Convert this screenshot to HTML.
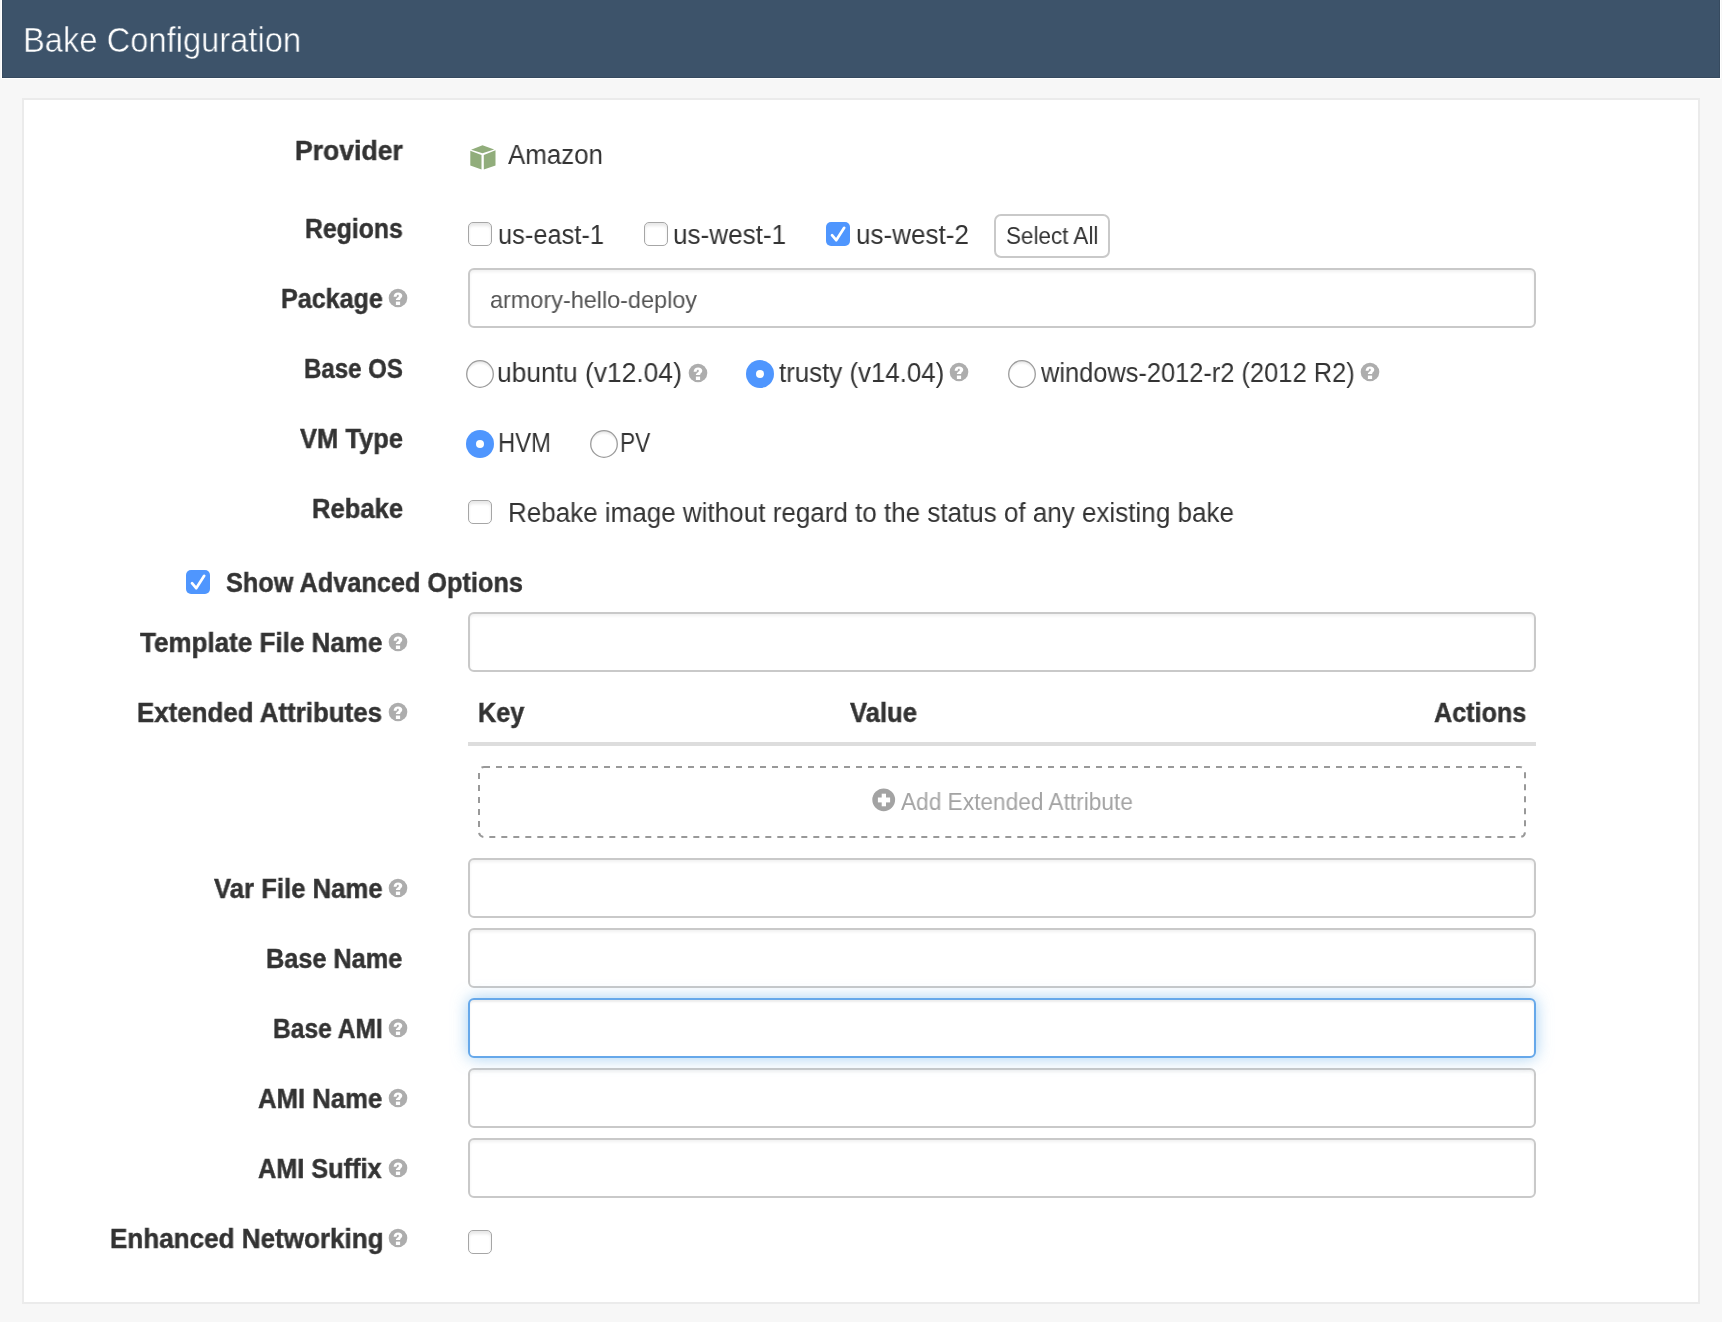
<!DOCTYPE html>
<html><head><meta charset="utf-8"><style>
html,body{margin:0;padding:0}
body{width:1722px;height:1322px;overflow:hidden;background:#f7f7f7;position:relative;font-family:"Liberation Sans",sans-serif}
.t{position:absolute;white-space:pre;transform-origin:0 0;will-change:transform}
.topwhite{position:absolute;left:1px;top:0;width:1720px;height:79px;background:#fff}
.hdr{position:absolute;left:2px;top:0;width:1718px;height:78px;background:#3d536a;box-shadow:inset 1px 0 0 rgba(0,0,0,.08),inset -1px -1px 0 rgba(0,0,0,.1)}
.panel{position:absolute;left:22px;top:98px;width:1678px;height:1206px;box-sizing:border-box;border:2px solid #ebebeb;background:#fff}
.inp{position:absolute;left:468px;width:1068px;height:60px;box-sizing:border-box;border:2px solid #c9c9c9;border-radius:6px;background:#fff;box-shadow:inset 0 2px 3px rgba(0,0,0,.06)}
.inp.focus{border-color:#66a8ea;box-shadow:inset 0 2px 2px rgba(0,0,0,.075),0 0 16px rgba(102,175,233,.6)}
.btn{position:absolute;left:994px;top:214px;width:116px;height:44px;box-sizing:border-box;border:2px solid #c9c9c9;border-radius:7px;background:#fff}
.cb{position:absolute;width:24px;height:24px;box-sizing:border-box;border:1.5px solid #a6a6a6;border-radius:5px;background:#fff;box-shadow:inset 0 3px 3px rgba(0,0,0,.09)}
.cb.on{border:none;background:#4f96fe;box-shadow:none}
.cb svg{position:absolute;left:0;top:0}
.rd{position:absolute;width:28px;height:28px;box-sizing:border-box;border:1.5px solid #a6a6a6;border-radius:50%;background:#fff;box-shadow:inset 0 2px 2px rgba(0,0,0,.06)}
.rd.on{border:none;background:#4f96fe;box-shadow:none}
.rd .dot{position:absolute;left:10px;top:10px;width:8px;height:8px;border-radius:50%;background:#fff}
.hi{position:absolute}
.rdsvg{position:absolute}
.thline{position:absolute;left:468px;top:742px;width:1068px;height:4px;background:#ddd}
.dash{position:absolute;left:478px;top:766px}
</style></head><body>
<div class="topwhite"></div>
<div class="hdr"></div>
<div class="panel"></div>

<div class="inp" style="top:268px"></div>
<div class="inp" style="top:612px"></div>
<div class="inp" style="top:858px"></div>
<div class="inp" style="top:928px"></div>
<div class="inp" style="top:1068px"></div>
<div class="inp" style="top:1138px"></div>
<div class="inp focus" style="top:998px"></div>
<div class="btn"></div>
<div class="thline"></div>
<svg class="dash" width="1048" height="72"><rect x="1" y="1" width="1046" height="70" rx="5" fill="none" stroke="#999" stroke-width="2" stroke-dasharray="6 6"/></svg>
<div class="cb" style="left:468px;top:222px"></div>
<div class="cb" style="left:644px;top:222px"></div>
<div class="cb on" style="left:826px;top:222px"><svg width="24" height="24" viewBox="0 0 24 24"><path d="M6 13.2 L10.2 18.2 L18.2 5.8" fill="none" stroke="#fff" stroke-width="2.7" stroke-linecap="round" stroke-linejoin="round"/></svg></div>
<div class="cb" style="left:468px;top:500px"></div>
<div class="cb" style="left:468px;top:1230px"></div>
<div class="cb on" style="left:186px;top:570px"><svg width="24" height="24" viewBox="0 0 24 24"><path d="M6 13.2 L10.2 18.2 L18.2 5.8" fill="none" stroke="#fff" stroke-width="2.7" stroke-linecap="round" stroke-linejoin="round"/></svg></div>
<svg class="rdsvg" style="left:466px;top:360px" width="28" height="28" viewBox="0 0 28 28"><defs><radialGradient id="rg466" cx="50%" cy="62%" r="58%"><stop offset="80%" stop-color="#fff"/><stop offset="100%" stop-color="#e9e9e9"/></radialGradient></defs><circle cx="14" cy="14" r="13.3" fill="url(#rg466)" stroke="#9c9c9c" stroke-width="1.3"/></svg>
<div class="rd on" style="left:746px;top:360px"><div class="dot"></div></div>
<svg class="rdsvg" style="left:1008px;top:360px" width="28" height="28" viewBox="0 0 28 28"><defs><radialGradient id="rg1008" cx="50%" cy="62%" r="58%"><stop offset="80%" stop-color="#fff"/><stop offset="100%" stop-color="#e9e9e9"/></radialGradient></defs><circle cx="14" cy="14" r="13.3" fill="url(#rg1008)" stroke="#9c9c9c" stroke-width="1.3"/></svg>
<div class="rd on" style="left:466px;top:430px"><div class="dot"></div></div>
<svg class="rdsvg" style="left:590px;top:430px" width="28" height="28" viewBox="0 0 28 28"><defs><radialGradient id="rg590" cx="50%" cy="62%" r="58%"><stop offset="80%" stop-color="#fff"/><stop offset="100%" stop-color="#e9e9e9"/></radialGradient></defs><circle cx="14" cy="14" r="13.3" fill="url(#rg590)" stroke="#9c9c9c" stroke-width="1.3"/></svg>
<svg class="hi" style="left:388px;top:288px" width="20" height="20" viewBox="0 0 20 20"><circle cx="10" cy="10" r="9.3" fill="#adadad"/><path d="M5.6 8.7 C5.7 5.8 7.6 4.4 10.1 4.4 C12.6 4.4 14.3 5.9 14.3 7.8 C14.3 9.9 12.1 10.3 12.1 11.9 L7.9 11.9 C7.9 9.7 10.8 9.3 10.8 7.9 C10.8 7.2 10.4 6.8 9.9 6.8 C9.2 6.8 8.8 7.4 8.6 8.7 Z" fill="#fff"/><rect x="7.9" y="13.6" width="4.2" height="3.4" fill="#fff"/></svg>
<svg class="hi" style="left:687.8px;top:362.5px" width="20" height="20" viewBox="0 0 20 20"><circle cx="10" cy="10" r="9.3" fill="#adadad"/><path d="M5.6 8.7 C5.7 5.8 7.6 4.4 10.1 4.4 C12.6 4.4 14.3 5.9 14.3 7.8 C14.3 9.9 12.1 10.3 12.1 11.9 L7.9 11.9 C7.9 9.7 10.8 9.3 10.8 7.9 C10.8 7.2 10.4 6.8 9.9 6.8 C9.2 6.8 8.8 7.4 8.6 8.7 Z" fill="#fff"/><rect x="7.9" y="13.6" width="4.2" height="3.4" fill="#fff"/></svg>
<svg class="hi" style="left:949.4px;top:362.2px" width="20" height="20" viewBox="0 0 20 20"><circle cx="10" cy="10" r="9.3" fill="#adadad"/><path d="M5.6 8.7 C5.7 5.8 7.6 4.4 10.1 4.4 C12.6 4.4 14.3 5.9 14.3 7.8 C14.3 9.9 12.1 10.3 12.1 11.9 L7.9 11.9 C7.9 9.7 10.8 9.3 10.8 7.9 C10.8 7.2 10.4 6.8 9.9 6.8 C9.2 6.8 8.8 7.4 8.6 8.7 Z" fill="#fff"/><rect x="7.9" y="13.6" width="4.2" height="3.4" fill="#fff"/></svg>
<svg class="hi" style="left:1359.5px;top:362.2px" width="20" height="20" viewBox="0 0 20 20"><circle cx="10" cy="10" r="9.3" fill="#adadad"/><path d="M5.6 8.7 C5.7 5.8 7.6 4.4 10.1 4.4 C12.6 4.4 14.3 5.9 14.3 7.8 C14.3 9.9 12.1 10.3 12.1 11.9 L7.9 11.9 C7.9 9.7 10.8 9.3 10.8 7.9 C10.8 7.2 10.4 6.8 9.9 6.8 C9.2 6.8 8.8 7.4 8.6 8.7 Z" fill="#fff"/><rect x="7.9" y="13.6" width="4.2" height="3.4" fill="#fff"/></svg>
<svg class="hi" style="left:388px;top:632px" width="20" height="20" viewBox="0 0 20 20"><circle cx="10" cy="10" r="9.3" fill="#adadad"/><path d="M5.6 8.7 C5.7 5.8 7.6 4.4 10.1 4.4 C12.6 4.4 14.3 5.9 14.3 7.8 C14.3 9.9 12.1 10.3 12.1 11.9 L7.9 11.9 C7.9 9.7 10.8 9.3 10.8 7.9 C10.8 7.2 10.4 6.8 9.9 6.8 C9.2 6.8 8.8 7.4 8.6 8.7 Z" fill="#fff"/><rect x="7.9" y="13.6" width="4.2" height="3.4" fill="#fff"/></svg>
<svg class="hi" style="left:388px;top:702px" width="20" height="20" viewBox="0 0 20 20"><circle cx="10" cy="10" r="9.3" fill="#adadad"/><path d="M5.6 8.7 C5.7 5.8 7.6 4.4 10.1 4.4 C12.6 4.4 14.3 5.9 14.3 7.8 C14.3 9.9 12.1 10.3 12.1 11.9 L7.9 11.9 C7.9 9.7 10.8 9.3 10.8 7.9 C10.8 7.2 10.4 6.8 9.9 6.8 C9.2 6.8 8.8 7.4 8.6 8.7 Z" fill="#fff"/><rect x="7.9" y="13.6" width="4.2" height="3.4" fill="#fff"/></svg>
<svg class="hi" style="left:388px;top:878px" width="20" height="20" viewBox="0 0 20 20"><circle cx="10" cy="10" r="9.3" fill="#adadad"/><path d="M5.6 8.7 C5.7 5.8 7.6 4.4 10.1 4.4 C12.6 4.4 14.3 5.9 14.3 7.8 C14.3 9.9 12.1 10.3 12.1 11.9 L7.9 11.9 C7.9 9.7 10.8 9.3 10.8 7.9 C10.8 7.2 10.4 6.8 9.9 6.8 C9.2 6.8 8.8 7.4 8.6 8.7 Z" fill="#fff"/><rect x="7.9" y="13.6" width="4.2" height="3.4" fill="#fff"/></svg>
<svg class="hi" style="left:388px;top:1018px" width="20" height="20" viewBox="0 0 20 20"><circle cx="10" cy="10" r="9.3" fill="#adadad"/><path d="M5.6 8.7 C5.7 5.8 7.6 4.4 10.1 4.4 C12.6 4.4 14.3 5.9 14.3 7.8 C14.3 9.9 12.1 10.3 12.1 11.9 L7.9 11.9 C7.9 9.7 10.8 9.3 10.8 7.9 C10.8 7.2 10.4 6.8 9.9 6.8 C9.2 6.8 8.8 7.4 8.6 8.7 Z" fill="#fff"/><rect x="7.9" y="13.6" width="4.2" height="3.4" fill="#fff"/></svg>
<svg class="hi" style="left:388px;top:1088px" width="20" height="20" viewBox="0 0 20 20"><circle cx="10" cy="10" r="9.3" fill="#adadad"/><path d="M5.6 8.7 C5.7 5.8 7.6 4.4 10.1 4.4 C12.6 4.4 14.3 5.9 14.3 7.8 C14.3 9.9 12.1 10.3 12.1 11.9 L7.9 11.9 C7.9 9.7 10.8 9.3 10.8 7.9 C10.8 7.2 10.4 6.8 9.9 6.8 C9.2 6.8 8.8 7.4 8.6 8.7 Z" fill="#fff"/><rect x="7.9" y="13.6" width="4.2" height="3.4" fill="#fff"/></svg>
<svg class="hi" style="left:388px;top:1158px" width="20" height="20" viewBox="0 0 20 20"><circle cx="10" cy="10" r="9.3" fill="#adadad"/><path d="M5.6 8.7 C5.7 5.8 7.6 4.4 10.1 4.4 C12.6 4.4 14.3 5.9 14.3 7.8 C14.3 9.9 12.1 10.3 12.1 11.9 L7.9 11.9 C7.9 9.7 10.8 9.3 10.8 7.9 C10.8 7.2 10.4 6.8 9.9 6.8 C9.2 6.8 8.8 7.4 8.6 8.7 Z" fill="#fff"/><rect x="7.9" y="13.6" width="4.2" height="3.4" fill="#fff"/></svg>
<svg class="hi" style="left:388px;top:1228px" width="20" height="20" viewBox="0 0 20 20"><circle cx="10" cy="10" r="9.3" fill="#adadad"/><path d="M5.6 8.7 C5.7 5.8 7.6 4.4 10.1 4.4 C12.6 4.4 14.3 5.9 14.3 7.8 C14.3 9.9 12.1 10.3 12.1 11.9 L7.9 11.9 C7.9 9.7 10.8 9.3 10.8 7.9 C10.8 7.2 10.4 6.8 9.9 6.8 C9.2 6.8 8.8 7.4 8.6 8.7 Z" fill="#fff"/><rect x="7.9" y="13.6" width="4.2" height="3.4" fill="#fff"/></svg>
<svg style="position:absolute;left:468px;top:143px" width="30" height="30" viewBox="0 0 30 30">
<path d="M14.5 2.3 L26.2 6.5 L14.5 10.2 L3.1 6.8 Z" fill="#91ad7b"/>
<path d="M2.3 7.8 L13.5 12.1 L13.5 26.6 L2.3 22.4 Z" fill="#91ad7b"/>
<path d="M15.8 12.1 L27.5 7.3 L27.5 22.4 L15.8 26.6 Z" fill="#91ad7b"/>
</svg>
<svg style="position:absolute;left:871px;top:787px" width="26" height="26" viewBox="0 0 26 26">
<circle cx="12.7" cy="12.8" r="11.4" fill="#a3a3a3"/>
<rect x="6.9" y="10.5" width="12.2" height="4.9" fill="#fff"/>
<rect x="10.7" y="6.7" width="4.3" height="12.6" fill="#fff"/>
</svg>
<div class="t" style="left:22.50px;top:22.20px;font-size:35px;line-height:35px;font-weight:400;color:#fff;transform:scaleX(0.9341);-webkit-text-stroke:0.5px #3d536a;">Bake Configuration</div>
<div class="t" style="left:295.33px;top:138.00px;font-size:27px;line-height:27px;font-weight:700;color:#333;transform:scaleX(0.9841);-webkit-text-stroke:0.45px #333;">Provider</div>
<div class="t" style="left:304.66px;top:216.00px;font-size:27px;line-height:27px;font-weight:700;color:#333;transform:scaleX(0.9183);-webkit-text-stroke:0.45px #333;">Regions</div>
<div class="t" style="left:280.64px;top:285.70px;font-size:27px;line-height:27px;font-weight:700;color:#333;transform:scaleX(0.9299);-webkit-text-stroke:0.45px #333;">Package</div>
<div class="t" style="left:303.62px;top:355.80px;font-size:27px;line-height:27px;font-weight:700;color:#333;transform:scaleX(0.8907);-webkit-text-stroke:0.45px #333;">Base OS</div>
<div class="t" style="left:299.50px;top:425.70px;font-size:27px;line-height:27px;font-weight:700;color:#333;transform:scaleX(0.9444);-webkit-text-stroke:0.45px #333;">VM Type</div>
<div class="t" style="left:311.50px;top:495.60px;font-size:27px;line-height:27px;font-weight:700;color:#333;transform:scaleX(0.9484);-webkit-text-stroke:0.45px #333;">Rebake</div>
<div class="t" style="left:226.06px;top:570.00px;font-size:27px;line-height:27px;font-weight:700;color:#333;transform:scaleX(0.9365);-webkit-text-stroke:0.45px #333;">Show Advanced Options</div>
<div class="t" style="left:140.00px;top:629.50px;font-size:27px;line-height:27px;font-weight:700;color:#333;transform:scaleX(0.9637);-webkit-text-stroke:0.45px #333;">Template File Name</div>
<div class="t" style="left:137.38px;top:699.50px;font-size:27px;line-height:27px;font-weight:700;color:#333;transform:scaleX(0.9589);-webkit-text-stroke:0.45px #333;">Extended Attributes</div>
<div class="t" style="left:214.40px;top:875.50px;font-size:27px;line-height:27px;font-weight:700;color:#333;transform:scaleX(0.9523);-webkit-text-stroke:0.45px #333;">Var File Name</div>
<div class="t" style="left:265.93px;top:945.70px;font-size:27px;line-height:27px;font-weight:700;color:#333;transform:scaleX(0.9364);-webkit-text-stroke:0.45px #333;">Base Name</div>
<div class="t" style="left:272.58px;top:1015.80px;font-size:27px;line-height:27px;font-weight:700;color:#333;transform:scaleX(0.9111);-webkit-text-stroke:0.45px #333;">Base AMI</div>
<div class="t" style="left:258.45px;top:1085.50px;font-size:27px;line-height:27px;font-weight:700;color:#333;transform:scaleX(0.9519);-webkit-text-stroke:0.45px #333;">AMI Name</div>
<div class="t" style="left:258.46px;top:1155.70px;font-size:27px;line-height:27px;font-weight:700;color:#333;transform:scaleX(0.9359);-webkit-text-stroke:0.45px #333;">AMI Suffix</div>
<div class="t" style="left:109.87px;top:1225.70px;font-size:27px;line-height:27px;font-weight:700;color:#333;transform:scaleX(0.9650);-webkit-text-stroke:0.45px #333;">Enhanced Networking</div>
<div class="t" style="left:477.53px;top:700.00px;font-size:27px;line-height:27px;font-weight:700;color:#333;transform:scaleX(0.9340);-webkit-text-stroke:0.45px #333;">Key</div>
<div class="t" style="left:850.40px;top:700.00px;font-size:27px;line-height:27px;font-weight:700;color:#333;transform:scaleX(0.9500);-webkit-text-stroke:0.45px #333;">Value</div>
<div class="t" style="left:1433.87px;top:699.60px;font-size:27px;line-height:27px;font-weight:700;color:#333;transform:scaleX(0.9320);-webkit-text-stroke:0.45px #333;">Actions</div>
<div class="t" style="left:508.00px;top:141.90px;font-size:27px;line-height:27px;font-weight:400;color:#333;transform:scaleX(0.9588);">Amazon</div>
<div class="t" style="left:497.92px;top:221.70px;font-size:27px;line-height:27px;font-weight:400;color:#333;transform:scaleX(0.9422);">us-east-1</div>
<div class="t" style="left:673.37px;top:221.70px;font-size:27px;line-height:27px;font-weight:400;color:#333;transform:scaleX(0.9667);">us-west-1</div>
<div class="t" style="left:856.07px;top:221.70px;font-size:27px;line-height:27px;font-weight:400;color:#333;transform:scaleX(0.9649);">us-west-2</div>
<div class="t" style="left:1006.22px;top:224.90px;font-size:23px;line-height:23px;font-weight:400;color:#333;transform:scaleX(0.9761);">Select All</div>
<div class="t" style="left:490.02px;top:287.80px;font-size:24px;line-height:24px;font-weight:400;color:#555;transform:scaleX(0.9763);">armory-hello-deploy</div>
<div class="t" style="left:497.05px;top:359.60px;font-size:27px;line-height:27px;font-weight:400;color:#333;transform:scaleX(0.9774);">ubuntu (v12.04)</div>
<div class="t" style="left:778.50px;top:359.60px;font-size:27px;line-height:27px;font-weight:400;color:#333;transform:scaleX(0.9579);">trusty (v14.04)</div>
<div class="t" style="left:1040.50px;top:359.80px;font-size:27px;line-height:27px;font-weight:400;color:#333;transform:scaleX(0.9413);">windows-2012-r2 (2012 R2)</div>
<div class="t" style="left:497.84px;top:429.70px;font-size:27px;line-height:27px;font-weight:400;color:#333;transform:scaleX(0.8821);">HVM</div>
<div class="t" style="left:620.32px;top:429.70px;font-size:27px;line-height:27px;font-weight:400;color:#333;transform:scaleX(0.8412);">PV</div>
<div class="t" style="left:507.87px;top:499.50px;font-size:27px;line-height:27px;font-weight:400;color:#333;transform:scaleX(0.9634);">Rebake image without regard to the status of any existing bake</div>
<div class="t" style="left:900.80px;top:790.70px;font-size:23px;line-height:23px;font-weight:400;color:#a3a3a3;transform:scaleX(0.9855);">Add Extended Attribute</div>
</body></html>
